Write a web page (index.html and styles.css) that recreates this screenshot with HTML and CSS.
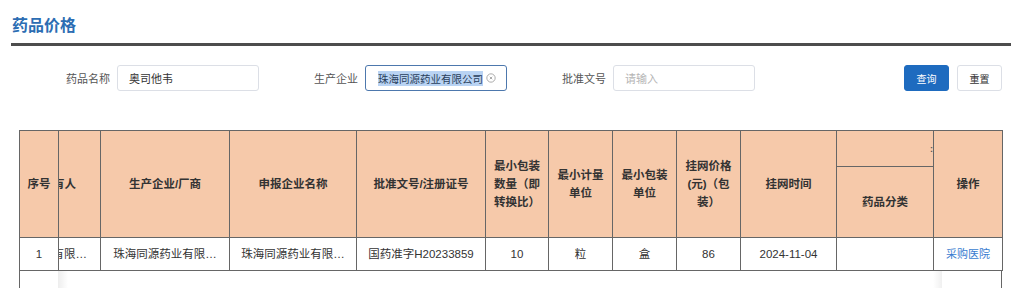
FILE: index.html
```html
<!DOCTYPE html>
<html lang="zh-CN">

<head>
    <meta charset="UTF-8">
    <meta name="viewport" content="width=device-width, initial-scale=1.0">
    <title>药品价格</title>
    <link rel="stylesheet" href="styles.css">
</head>

<body>
    <div class="page">
        <h2 class="title">药品价格</h2>

        <!-- 查询条件 -->
        <div class="search">
            <div class="field">
                <span class="field-label">药品名称</span>
                <div class="input">奥司他韦</div>
            </div>
            <div class="field">
                <span class="field-label">生产企业</span>
                <div class="input is-focus">
                    <span class="selected">珠海同源药业有限公司</span>
                    <svg class="clear" viewBox="0 0 12 12" width="10" height="10">
                        <circle cx="6" cy="6" r="5" fill="none" stroke="#9a9a9a" stroke-width="1" />
                        <path d="M4.5 4.5 7.5 7.5M7.5 4.5 4.5 7.5" stroke="#9a9a9a" stroke-width="1" />
                    </svg>
                </div>
            </div>
            <div class="field">
                <span class="field-label">批准文号</span>
                <div class="input placeholder">请输入</div>
            </div>
            <div class="actions">
                <button class="btn btn-primary">查询</button>
                <button class="btn">重置</button>
            </div>
        </div>

        <!-- 价格列表 -->
        <div class="table-box">
            <table class="price-table">
                <colgroup>
                    <col style="width: 39px">
                    <col style="width: 42px">
                    <col style="width: 129px">
                    <col style="width: 127px">
                    <col style="width: 129px">
                    <col style="width: 63px">
                    <col style="width: 64px">
                    <col style="width: 64px">
                    <col style="width: 64px">
                    <col style="width: 96px">
                    <col style="width: 97px">
                    <col style="width: 69px">
                </colgroup>
                <thead>
                    <tr class="head-top">
                        <th rowspan="2">序号</th>
                        <th rowspan="2" class="cut"><div class="cut-inner head-cut">上市许可持有人</div></th>
                        <th rowspan="2">生产企业/厂商</th>
                        <th rowspan="2">申报企业名称</th>
                        <th rowspan="2">批准文号/注册证号</th>
                        <th rowspan="2">最小包装数量（即转换比）</th>
                        <th rowspan="2">最小计量单位</th>
                        <th rowspan="2">最小包装单位</th>
                        <th rowspan="2">挂网价格(元)（包装）</th>
                        <th rowspan="2">挂网时间</th>
                        <th class="group">:</th>
                        <th rowspan="2" class="fixed-right">操作</th>
                    </tr>
                    <tr class="head-sub">
                        <th>药品分类</th>
                    </tr>
                </thead>
                <tbody>
                    <tr>
                        <td>1</td>
                        <td class="cut"><div class="cut-inner body-cut">珠海同源药业有限…</div></td>
                        <td>珠海同源药业有限…</td>
                        <td>珠海同源药业有限…</td>
                        <td>国药准字H20233859</td>
                        <td>10</td>
                        <td>粒</td>
                        <td>盒</td>
                        <td>86</td>
                        <td>2024-11-04</td>
                        <td></td>
                        <td class="fixed-right"><a href="#" class="link">采购医院</a></td>
                    </tr>
                </tbody>
            </table>
            <div class="table-empty"></div>
        </div>
    </div>
</body>

</html>
```

FILE: styles.css
```css
* {
    margin: 0;
    padding: 0;
    box-sizing: border-box;
}

body {
    font-family: "Liberation Sans", "Noto Sans CJK SC", sans-serif;
    color: #333;
    background: #fff;
}

.page {
    padding: 0 13px 0 11px;
}

.title {
    font-size: 16px;
    line-height: 24px;
    font-weight: 700;
    color: #2c6db3;
    padding: 14px 0 5px 1px;
    border-bottom: 3px solid #4d4d4d;
}

/* 查询条件 */
.search {
    display: flex;
    align-items: center;
    margin-top: 19px;
    padding-right: 9px;
}

.field {
    display: flex;
    align-items: center;
    gap: 7px;
    width: 248px;
}

.field-label {
    flex: 1;
    text-align: right;
    font-size: 11px;
    color: #555;
}

.input {
    display: flex;
    align-items: center;
    justify-content: space-between;
    width: 142px;
    height: 26px;
    padding: 0 11px;
    border: 1px solid #dcdfe6;
    border-radius: 3px;
    font-size: 11px;
    color: #333;
}

.input.is-focus {
    border-color: #4d78ad;
    padding: 0 10px 0 12px;
}

.input.placeholder {
    color: #b5b5b5;
}

.selected {
    background: #b9d3f3;
    color: #2a3f5c;
    font-size: 10.5px;
}

.clear {
    display: block;
}

.actions {
    display: flex;
    gap: 8px;
    margin-left: auto;
}

.btn {
    width: 45px;
    height: 26px;
    border: 1px solid #dcdfe6;
    border-radius: 3px;
    background: #fff;
    color: #333;
    font-family: inherit;
    font-size: 10px;
}

.btn-primary {
    background: #1e6bbf;
    border-color: #1e6bbf;
    color: #fff;
}

/* 价格列表 */
.table-box {
    position: relative;
    margin: 39px 9px 0 8px;
}

.price-table {
    width: 983px;
    table-layout: fixed;
    border-collapse: collapse;
    font-size: 11.5px;
}

.price-table th,
.price-table td {
    border: 1px solid #666;
    text-align: center;
    vertical-align: middle;
    padding: 0 6px;
    line-height: 18px;
    white-space: normal;
}

.price-table th {
    background: #f6c9aa;
    font-weight: 700;
    color: #333;
}

.head-top th {
    height: 36px;
}

.head-sub th {
    height: 71px;
}

.price-table td {
    height: 33px;
    white-space: nowrap;
    overflow: hidden;
}

.price-table th.group {
    text-align: right;
    padding-right: 0;
    font-size: 9px;
    color: #555;
}

.price-table .cut {
    padding: 0;
}

.cut-inner {
    display: flex;
    justify-content: flex-end;
    overflow: hidden;
    white-space: nowrap;
}

.head-cut {
    padding-right: 24px;
}

.body-cut {
    padding-right: 13px;
}

.link {
    color: #3b7dd0;
    text-decoration: none;
    font-size: 11px;
}

.table-empty {
    height: 60px;
    border: 1px solid #666;
    border-top: none;
}

/* 固定列阴影 */
.table-box::before,
.table-box::after {
    content: "";
    position: absolute;
    top: 141px;
    bottom: 0;
    width: 10px;
}

.table-box::before {
    left: 39px;
    background: linear-gradient(to right, rgba(0, 0, 0, .07), rgba(0, 0, 0, 0));
}

.table-box::after {
    right: 60px;
    width: 9px;
    background: linear-gradient(to left, rgba(0, 0, 0, .06), rgba(0, 0, 0, 0));
}
```
